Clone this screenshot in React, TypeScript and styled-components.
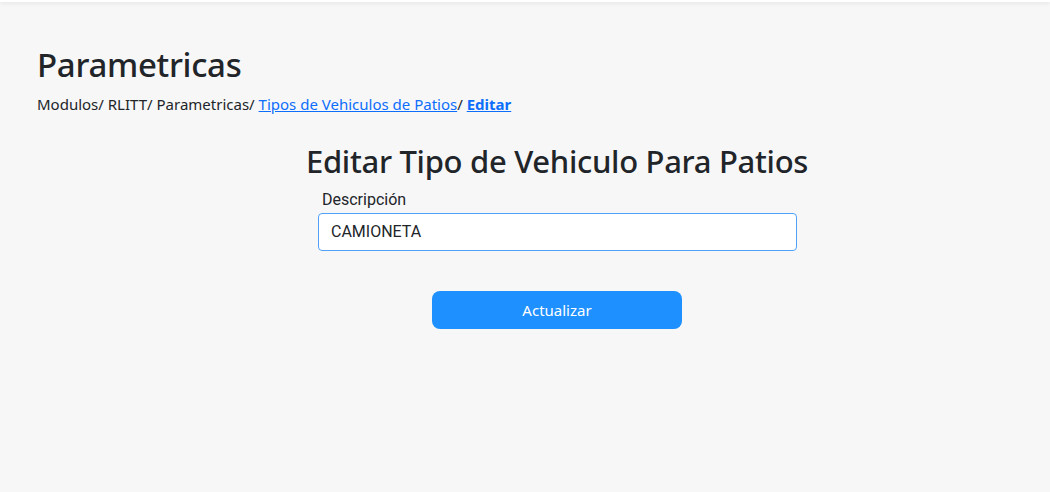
import React, { useState } from "react";
import styled, { createGlobalStyle } from "styled-components";

const GlobalStyle = createGlobalStyle`
  html, body {
    margin: 0;
    padding: 0;
    background: #f7f7f7;
  }
  body {
    font-family: "Noto Sans", "Open Sans", sans-serif;
    color: #212529;
  }
  * {
    box-sizing: border-box;
  }
`;

const Page = styled.div`
  min-height: 492px;
  background: #f7f7f7;
`;

const TopBar = styled.div`
  height: 2px;
  background: #ffffff;
  box-shadow: 0 1px 4px rgba(0, 0, 0, 0.12);
`;

const Header = styled.header`
  padding: 43px 37px 0;
`;

const Title = styled.h1`
  margin: 0;
  font-size: 33px;
  font-weight: 500;
  line-height: 1.2;
  letter-spacing: -0.3px;
`;

const Breadcrumb = styled.nav`
  margin-top: 9px;
  font-size: 15px;
  line-height: 20px;
`;

const Crumb = styled.a<{ $active?: boolean }>`
  color: #0d6efd;
  text-decoration: underline;
  font-weight: ${(p) => (p.$active ? 700 : 400)};
  cursor: pointer;
`;

const FormSection = styled.section`
  display: flex;
  flex-direction: column;
  align-items: center;
  padding-left: 64px;
  padding-top: 29px;
`;

const FormTitle = styled.h2`
  margin: 0;
  font-size: 31px;
  font-weight: 500;
  line-height: 1.2;
  letter-spacing: -0.3px;
`;

const Field = styled.div`
  width: 479px;
  margin-left: 1px;
  margin-top: 10px;
  display: flex;
  flex-direction: column;
`;

const Label = styled.label`
  font-family: Roboto, "Noto Sans", sans-serif;
  font-size: 16px;
  line-height: 19px;
  padding-left: 4px;
  margin-bottom: 4px;
`;

const Input = styled.input`
  height: 38px;
  width: 100%;
  border: 1px solid #4fa3f7;
  border-radius: 4px;
  background: #ffffff;
  padding: 0 12px;
  font-family: Roboto, "Noto Sans", sans-serif;
  font-size: 16px;
  color: #212529;
  outline: none;
`;

const SubmitButton = styled.button`
  margin-top: 40px;
  width: 250px;
  height: 38px;
  border: none;
  border-radius: 8px;
  background: #1e90ff;
  color: #ffffff;
  font-family: "Noto Sans", "Open Sans", sans-serif;
  font-size: 15px;
  cursor: pointer;
`;

const App = () => {
  const [descripcion, setDescripcion] = useState("CAMIONETA");

  return (
    <Page>
      <GlobalStyle />
      <TopBar />
      <Header>
        <Title>Parametricas</Title>
        <Breadcrumb>
          Modulos/ RLITT/ Parametricas/ <Crumb>Tipos de Vehiculos de Patios</Crumb>/{" "}
          <Crumb $active>Editar</Crumb>
        </Breadcrumb>
      </Header>
      <FormSection>
        <FormTitle>Editar Tipo de Vehiculo Para Patios</FormTitle>
        <Field>
          <Label htmlFor="descripcion">Descripción</Label>
          <Input
            id="descripcion"
            value={descripcion}
            onChange={(e) => setDescripcion(e.target.value)}
          />
        </Field>
        <SubmitButton>Actualizar</SubmitButton>
      </FormSection>
    </Page>
  );
};

export default App;
